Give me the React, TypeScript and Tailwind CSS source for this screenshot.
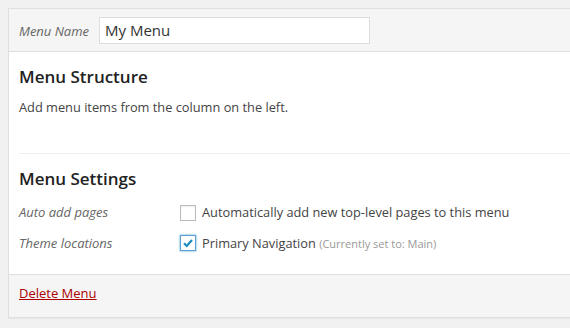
export default function App() {
  return (
    <div className="min-h-[328px] w-[570px] overflow-hidden bg-[#f1f1f1] pt-2 pl-2 font-['Open_Sans',sans-serif] text-[12.8px] text-[#444]">
      <div className="w-[580px] border border-[#dfdfdf] bg-white shadow-[0_1px_1px_rgba(0,0,0,0.04)]">
        <div className="flex h-[43px] items-center border-b border-[#dfdfdf] bg-[#f5f5f5] px-[10px]">
          <label className="w-[80px] pt-[3px] text-[13px] italic text-[#666]">Menu Name</label>
          <input
            className="h-[27px] w-[271px] border border-[#dddddd] bg-white px-[5px] text-[15px] text-[#333] outline-none"
            defaultValue="My Menu"
          />
        </div>
        <div className="px-[10px]">
          <h3 className="pt-[13px] text-[17px] font-semibold leading-[24px] text-[#222]">Menu Structure</h3>
          <p className="mt-[8px] leading-[20px]">Add menu items from the column on the left.</p>
          <div className="mt-[36px] border-t border-[#eeeeee]" />
          <h3 className="pt-[13px] text-[17px] font-semibold leading-[24px] text-[#222]">Menu Settings</h3>
          <div className="mt-[12px] flex flex-col gap-[11px] pb-[21px]">
            <div className="flex items-center">
              <span className="w-[161px] text-[13px] italic text-[#666]">Auto add pages</span>
              <span className="mr-[6px] h-[16px] w-[16px] border border-[#bbbbbb] bg-white shadow-[inset_0_1px_2px_rgba(0,0,0,0.07)]" />
              <span>Automatically add new top-level pages to this menu</span>
            </div>
            <div className="flex items-center">
              <span className="w-[161px] text-[13px] italic text-[#666]">Theme locations</span>
              <span className="mr-[6px] flex h-[16px] w-[16px] items-center justify-center border border-[#5b9dd9] bg-white shadow-[0_0_2px_rgba(30,140,190,0.8)]">
                <svg width="12" height="12" viewBox="0 0 12 12">
                  <path d="M2 6.2 L4.8 9 L10 3" fill="none" stroke="#1e8cbe" strokeWidth="2.2" />
                </svg>
              </span>
              <span>
                Primary Navigation{" "}
                <span className="text-[11px] text-[#999]">(Currently set to: Main)</span>
              </span>
            </div>
          </div>
        </div>
        <div className="h-[43px] border-t border-[#dfdfdf] bg-[#f5f5f5] px-[10px] pt-[9px]">
          <a href="#" className="text-[13px] text-[#a00] underline">
            Delete Menu
          </a>
        </div>
      </div>
    </div>
  );
}
